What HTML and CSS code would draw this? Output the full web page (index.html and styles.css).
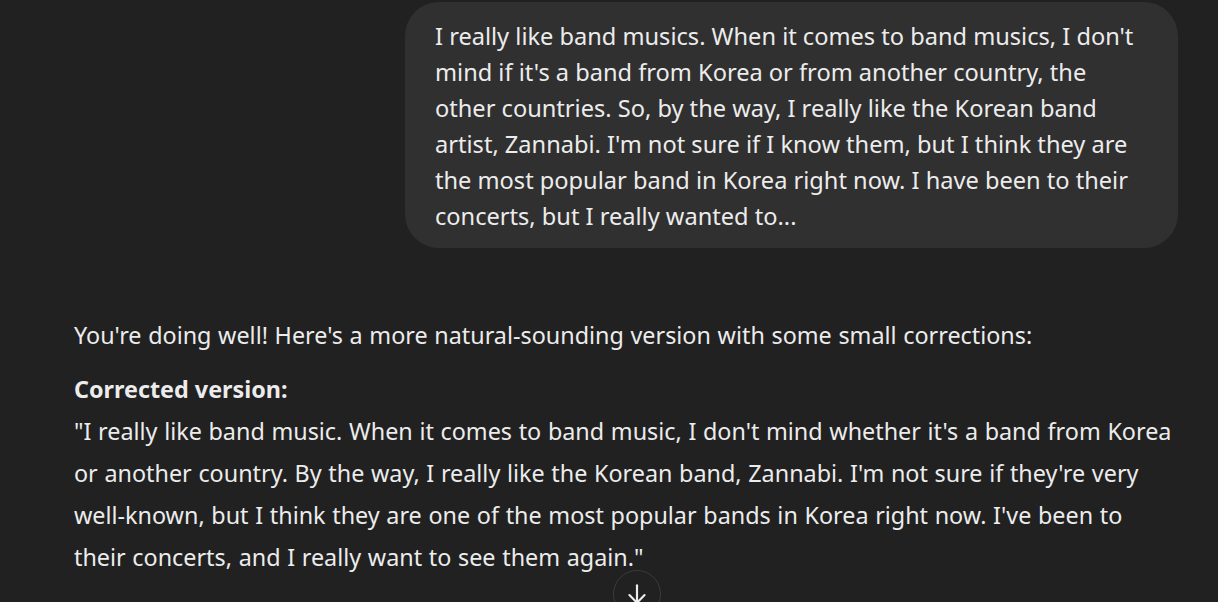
FILE: index.html
```html
<!DOCTYPE html>
<html lang="en">
<head>
    <meta charset="UTF-8">
    <meta name="viewport" content="width=device-width, initial-scale=1.0">
    <title>Chat</title>
    <link rel="stylesheet" href="styles.css">
</head>
<body>

<div class="thread">
    <div class="turn user">
        <div class="bubble">
            I really like band musics. When it comes to band musics, I don't mind if it's a band from Korea or from another country, the other countries. So, by the way, I really like the Korean band artist, Zannabi. I'm not sure if I know them, but I think they are the most popular band in Korea right now. I have been to their concerts, but I really wanted to...
        </div>
    </div>

    <div class="turn assistant">
        <p>You're doing well! Here's a more natural-sounding version with some small corrections:</p>
        <p class="corrected">
            <strong>Corrected version:</strong><br>
            "I really like band music. When it comes to band music, I don't mind whether it's a band from Korea or another country. By the way, I really like the Korean band, Zannabi. I'm not sure if they're very well-known, but I think they are one of the most popular bands in Korea right now. I've been to their concerts, and I really want to see them again."
        </p>
    </div>
</div>

<button class="scroll-down" aria-label="Scroll down">
    <svg width="26" height="26" viewBox="0 0 24 24" fill="none" stroke="currentColor" stroke-width="2" stroke-linecap="round" stroke-linejoin="round">
        <path d="M12 4v16"/>
        <path d="M5 13l7 7 7-7"/>
    </svg>
</button>

</body>
</html>
```
FILE: styles.css
```css
body {
    margin: 0;
    background: #212121;
    color: #ececec;
    font-family: "Noto Sans", "Noto Sans CJK KR", sans-serif;
    overflow: hidden;
}
.thread {
    width: 1104px;
    margin: 0 0 0 74px;
    padding-top: 2px;
}
.turn.user {
    display: flex;
    justify-content: flex-end;
}
.bubble {
    max-width: 713px;
    background: #303030;
    border-radius: 34px;
    padding: 16px 30px 14px;
    font-size: 23.6px;
    line-height: 36px;
}
.turn.assistant {
    margin-top: 66px;
    font-size: 23.35px;
    line-height: 42px;
    word-spacing: 0.6px;
}
.turn.assistant p {
    margin: 0 0 12px;
}
.corrected strong {
    font-weight: 700;
    word-spacing: 0;
}
.scroll-down {
    position: absolute;
    left: 613px;
    top: 570px;
    width: 48px;
    height: 48px;
    border-radius: 50%;
    border: 1px solid #3b3b3b;
    background: #212121;
    color: #ececec;
    display: flex;
    align-items: center;
    justify-content: center;
    padding: 0;
    cursor: pointer;
}
```
